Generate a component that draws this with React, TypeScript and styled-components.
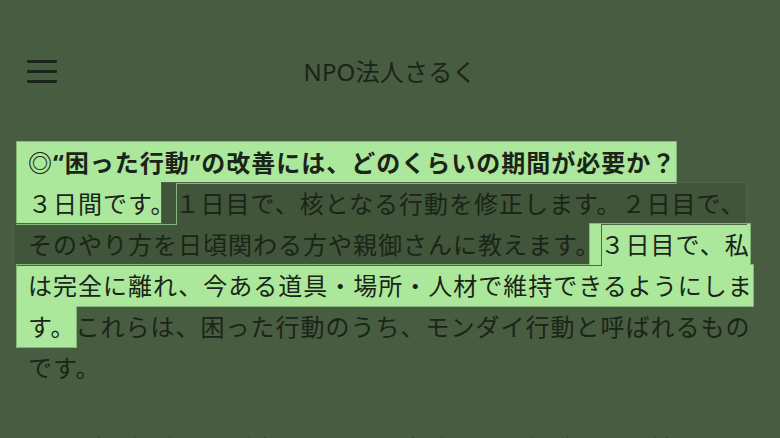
import * as React from "react";
import styled, { createGlobalStyle } from "styled-components";

const COLORS = {
  page: "#475c40",
  ink: "#1b2418",
  marker: "#abe89c",
  markerEdge: "#86b57a",
  shade: "#405539",
  shadeEdge: "#50664a",
};

const FONT = `"Noto Sans", "Noto Sans CJK JP", sans-serif`;

const GlobalStyle = createGlobalStyle`
  html, body {
    margin: 0;
    padding: 0;
    background: ${COLORS.page};
  }

  body {
    font-family: ${FONT};
    color: ${COLORS.ink};
    overflow: hidden;
  }
`;

const Page = styled.div`
  width: 780px;
  height: 438px;
  overflow: hidden;
`;

const Header = styled.header`
  display: grid;
  grid-template-columns: 1fr auto 1fr;
  align-items: center;
  height: 40px;
  padding: 52px 27px 0;
`;

const MenuButton = styled.button`
  justify-self: start;
  display: flex;
  padding: 0;
  border: none;
  background: none;
  color: ${COLORS.ink};
`;

const Title = styled.h1`
  margin: 0;
  font-size: 24px;
  font-weight: 400;
  line-height: 1;
  letter-spacing: 0.2px;
`;

const Article = styled.article`
  width: 742px;
  margin-top: 50px;
  padding: 0 10px 0 28px;
  font-size: 24px;
  line-height: 41px;
  letter-spacing: 1px;
`;

const Paragraph = styled.p<{ $gap?: number }>`
  margin: ${(p) => p.$gap ?? 0}px 0 0;
`;

const Marker = styled.mark<{ $tone?: "light" | "dark"; $lead?: number }>`
  background: ${(p) => (p.$tone === "dark" ? COLORS.shade : COLORS.marker)};
  color: inherit;
  padding: 4px 0 4px ${(p) => p.$lead ?? 11}px;
  margin-left: -${(p) => p.$lead ?? 11}px;
  -webkit-box-decoration-break: clone;
  box-decoration-break: clone;
  outline: 1px solid
    ${(p) => (p.$tone === "dark" ? COLORS.shadeEdge : COLORS.markerEdge)};
`;

const Question = styled.strong`
  font-weight: 700;
`;

const MenuIcon = () => (
  <svg width="30" height="24" viewBox="0 0 30 24" aria-hidden="true">
    <rect x="0" y="0" width="30" height="3" rx="1" fill="currentColor" />
    <rect x="0" y="10" width="30" height="3" rx="1" fill="currentColor" />
    <rect x="0" y="20" width="30" height="3" rx="1" fill="currentColor" />
  </svg>
);

export default function App() {
  return (
    <Page>
      <GlobalStyle />
      <Header>
        <MenuButton aria-label="メニュー">
          <MenuIcon />
        </MenuButton>
        <Title>NPO法人さるく</Title>
        <span />
      </Header>
      <Article>
        <Paragraph>
          <Marker>
            <Question>◎“困った行動”の改善には、どのくらいの期間が必要か？</Question>
            <br />
            ３日間です。
          </Marker>
          <Marker $tone="dark" $lead={14}>
            １日目で、核となる行動を修正します。２日目で、そのやり方を日頃関わる方や親御さんに教えます。
          </Marker>
          <Marker>３日目で、私は完全に離れ、今ある道具・場所・人材で維持できるようにします。</Marker>
          これらは、困った行動のうち、モンダイ行動と呼ばれるものです。
        </Paragraph>
        <Paragraph $gap={40}>
          　モンダイ行動は、ご本人にとって意味のある行動として続いています。
        </Paragraph>
      </Article>
    </Page>
  );
}
